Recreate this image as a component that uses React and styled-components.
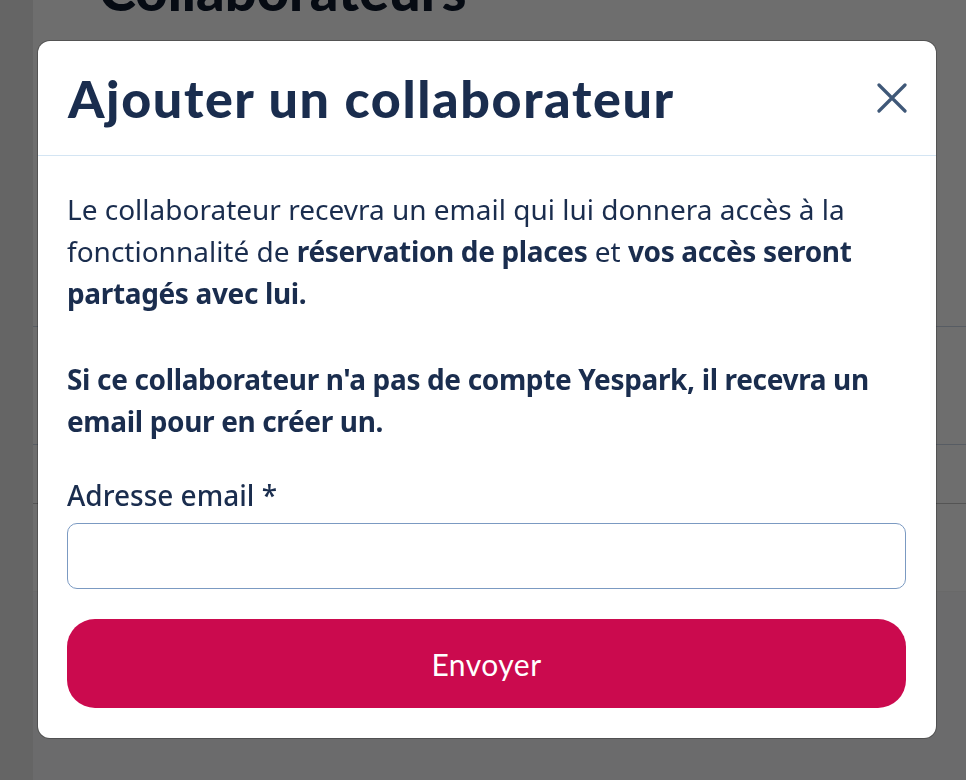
import React from 'react';
import styled, { createGlobalStyle } from 'styled-components';

const GlobalStyle = createGlobalStyle`
  html, body {
    margin: 0;
    padding: 0;
    height: 100%;
  }
  body {
    font-family: "Noto Sans", "Open Sans", sans-serif;
    background: #ffffff;
    overflow: hidden;
  }
`;

const Page = styled.div`
  display: flex;
  height: 780px;
`;

const Sidebar = styled.aside`
  width: 33px;
  background: #ebebeb;
  flex-shrink: 0;
`;

const Main = styled.main`
  flex: 1;
  display: flex;
  flex-direction: column;
`;

const PageTitle = styled.h1`
  margin: -40px 0 0 66px;
  font-family: "Lato", sans-serif;
  font-weight: 900;
  font-size: 56px;
  line-height: 60px;
  color: #0f1a2e;
`;

const Table = styled.div`
  margin-top: 306px;
  display: flex;
  flex-direction: column;
`;

const TableRow = styled.div`
  height: ${(p) => p.h}px;
  border-top: 1px solid ${(p) => p.line};
  background: ${(p) => p.bg || '#ffffff'};
`;

const Overlay = styled.div`
  position: fixed;
  inset: 0;
  background: rgba(0, 0, 0, 0.57);
  display: flex;
  align-items: flex-start;
  padding: 41px 0 0 38px;
`;

const Modal = styled.div`
  width: 898px;
  background: #ffffff;
  border-radius: 12px;
  box-shadow: 0 0 0 1px rgba(0, 0, 0, 0.25);
  display: flex;
  flex-direction: column;
  overflow: hidden;
`;

const Header = styled.div`
  height: 114px;
  border-bottom: 1px solid #d4e5f3;
  display: flex;
  align-items: center;
  justify-content: space-between;
  padding: 0 29px 0 30px;
`;

const Title = styled.h2`
  margin: 0;
  font-family: "Lato", sans-serif;
  font-weight: 900;
  font-size: 52px;
  letter-spacing: 1.6px;
  color: #1a2d4e;
`;

const CloseButton = styled.button`
  border: none;
  background: none;
  padding: 0;
  width: 30px;
  height: 30px;
  display: flex;
  align-items: center;
  justify-content: center;
  cursor: pointer;
  color: #3f5878;
`;

const Body = styled.div`
  padding: 32px 30px 30px 29px;
  display: flex;
  flex-direction: column;
`;

const Text = styled.p`
  margin: 0 0 ${(p) => p.mb || 0}px 0;
  font-size: 28px;
  line-height: 42px;
  color: #1a2d4e;
  font-weight: ${(p) => (p.bold ? 700 : 400)};
  letter-spacing: ${(p) => (p.bold ? '-0.35px' : '0')};

  strong {
    font-weight: 700;
    letter-spacing: -0.35px;
  }
`;

const Label = styled.label`
  margin-top: 37px;
  font-size: 28px;
  line-height: 32px;
  font-weight: 500;
  color: #1a2d4e;
`;

const Input = styled.input`
  margin-top: 12px;
  height: 66px;
  box-sizing: border-box;
  border: 1px solid #7b9ac2;
  border-radius: 10px;
  padding: 0 18px;
  font-size: 24px;
  font-family: inherit;
  outline: none;
`;

const SubmitButton = styled.button`
  margin-top: 30px;
  height: 89px;
  border: none;
  border-radius: 28px;
  background: #cb0a4e;
  color: #ffffff;
  font-family: "Lato", sans-serif;
  font-size: 30px;
  font-weight: 400;
  letter-spacing: 0.5px;
  cursor: pointer;
`;

const CloseIcon = () => (
  <svg width="30" height="30" viewBox="0 0 30 30" fill="none">
    <path d="M2 2 L28 28 M28 2 L2 28" stroke="currentColor" strokeWidth="3.2" strokeLinecap="round" />
  </svg>
);

export default function App() {
  return (
    <>
      <GlobalStyle />
      <Page>
        <Sidebar />
        <Main>
          <PageTitle>Collaborateurs</PageTitle>
          <Table>
            <TableRow h={117} line="#c9d6e6" />
            <TableRow h={58} line="#c9d6e6" />
            <TableRow h={87} line="#c2c2c2" />
            <TableRow h={200} line="#f4f4f4" bg="#f8f9fa" />
          </Table>
        </Main>
      </Page>
      <Overlay>
        <Modal>
          <Header>
            <Title>Ajouter un collaborateur</Title>
            <CloseButton aria-label="Fermer">
              <CloseIcon />
            </CloseButton>
          </Header>
          <Body>
            <Text mb={44}>
              Le collaborateur recevra un email qui lui donnera accès à la fonctionnalité de{' '}
              <strong>réservation de places</strong> et <strong>vos accès seront partagés avec lui.</strong>
            </Text>
            <Text bold>
              Si ce collaborateur n'a pas de compte Yespark, il recevra un email pour en créer un.
            </Text>
            <Label htmlFor="email">Adresse email *</Label>
            <Input id="email" type="email" />
            <SubmitButton>Envoyer</SubmitButton>
          </Body>
        </Modal>
      </Overlay>
    </>
  );
}
